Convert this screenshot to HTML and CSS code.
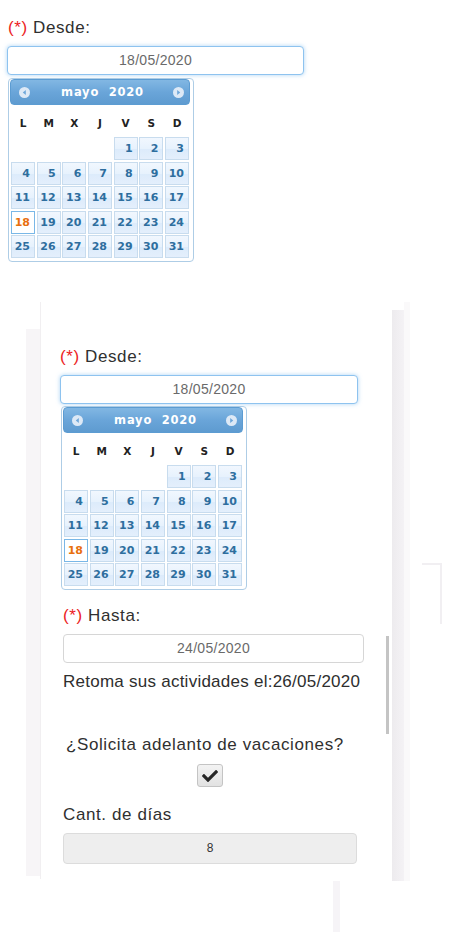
FILE: index.html
```html
<!DOCTYPE html>
<html lang="es">
<head>
<meta charset="utf-8">
<title>Vacaciones</title>
<link rel="stylesheet" href="styles.css">
</head>
<body>
<section class="top">
  <label class="lbl"><span class="req">(*)</span> Desde:</label>
  <div class="date-input focus top-input">18/05/2020</div>
  <div class="dp">
    <div class="dp-head">
      <svg class="nav" width="11" height="11" viewBox="0 0 11 11"><circle cx="5.5" cy="5.5" r="5.5" fill="#dde9f6"/><polygon points="6.8,3 3.8,5.5 6.8,8" fill="#6ea7d9"/></svg>
      <span class="dp-title">mayo&nbsp; 2020</span>
      <svg class="nav" width="11" height="11" viewBox="0 0 11 11"><circle cx="5.5" cy="5.5" r="5.5" fill="#dde9f6"/><polygon points="4.2,3 7.2,5.5 4.2,8" fill="#6ea7d9"/></svg>
    </div>
    <div class="dp-dow"><span>L</span><span>M</span><span>X</span><span>J</span><span>V</span><span>S</span><span>D</span></div>
    <div class="dp-days">
      <span class="blank"></span><span class="blank"></span><span class="blank"></span><span class="blank"></span>
      <span>1</span><span>2</span><span>3</span>
      <span>4</span><span>5</span><span>6</span><span>7</span><span>8</span><span>9</span><span>10</span>
      <span>11</span><span>12</span><span>13</span><span>14</span><span>15</span><span>16</span><span>17</span>
      <span class="on">18</span><span>19</span><span>20</span><span>21</span><span>22</span><span>23</span><span>24</span>
      <span>25</span><span>26</span><span>27</span><span>28</span><span>29</span><span>30</span><span>31</span>
    </div>
  </div>
</section>

<section class="frame">
  <div class="spacer"></div>
  <div class="strip-left"></div>
  <div class="panel">
    <label class="lbl desde2"><span class="req">(*)</span> Desde:</label>
    <div class="date-input focus mid-input">18/05/2020</div>
    <div class="dp dp2">
      <div class="dp-head">
        <svg class="nav" width="11" height="11" viewBox="0 0 11 11"><circle cx="5.5" cy="5.5" r="5.5" fill="#dde9f6"/><polygon points="6.8,3 3.8,5.5 6.8,8" fill="#6ea7d9"/></svg>
        <span class="dp-title">mayo&nbsp; 2020</span>
        <svg class="nav" width="11" height="11" viewBox="0 0 11 11"><circle cx="5.5" cy="5.5" r="5.5" fill="#dde9f6"/><polygon points="4.2,3 7.2,5.5 4.2,8" fill="#6ea7d9"/></svg>
      </div>
      <div class="dp-dow"><span>L</span><span>M</span><span>X</span><span>J</span><span>V</span><span>S</span><span>D</span></div>
      <div class="dp-days">
        <span class="blank"></span><span class="blank"></span><span class="blank"></span><span class="blank"></span>
        <span>1</span><span>2</span><span>3</span>
        <span>4</span><span>5</span><span>6</span><span>7</span><span>8</span><span>9</span><span>10</span>
        <span>11</span><span>12</span><span>13</span><span>14</span><span>15</span><span>16</span><span>17</span>
        <span class="on">18</span><span>19</span><span>20</span><span>21</span><span>22</span><span>23</span><span>24</span>
        <span>25</span><span>26</span><span>27</span><span>28</span><span>29</span><span>30</span><span>31</span>
      </div>
    </div>
    <label class="lbl hasta"><span class="req">(*)</span> Hasta:</label>
    <div class="date-input plain">24/05/2020</div>
    <p class="retoma">Retoma sus actividades el:26/05/2020</p>
    <p class="question">¿Solicita adelanto de vacaciones?</p>
    <div class="check">
      <svg width="16" height="16" viewBox="0 0 512 512"><path fill="#262626" d="M173.898 439.404l-166.4-166.4c-9.997-9.997-9.997-26.206 0-36.204l36.203-36.204c9.997-9.998 26.207-9.998 36.204 0L192 312.69 432.095 72.596c9.997-9.997 26.207-9.997 36.204 0l36.203 36.204c9.997 9.997 9.997 26.206 0 36.204l-294.4 294.401c-9.998 9.997-26.207 9.997-36.204-.001z"/></svg>
    </div>
    <label class="lbl cant">Cant. de días</label>
    <div class="num-input">8</div>
    <div class="thumb"></div>
  </div>
  <div class="strip-right"></div>
  <div class="strip-b"></div>
  <div class="gap"></div>
  <div class="bracket"></div>
</section>
<div class="bottom-strip"></div>
</body>
</html>
```

FILE: styles.css
```css
* { box-sizing: border-box; }
html, body { margin: 0; padding: 0; background: #fff; }
body {
  width: 460px;
  height: 946px;
  overflow: hidden;
  font-family: "Liberation Sans", Arial, sans-serif;
  color: #333;
}

.top { padding: 18px 0 0 7px; }

.lbl {
  display: block;
  font-size: 17px;
  line-height: 20px;
  letter-spacing: 0.6px;
  color: #303030;
  white-space: nowrap;
}
.top .lbl { margin-left: 1px; }
.req { color: #ec1c24; }

.date-input {
  height: 29px;
  border: 1px solid #d6d6d6;
  border-radius: 4px;
  font-size: 14px;
  letter-spacing: 0.3px;
  line-height: 27px;
  color: #6a6a6a;
  text-align: center;
  background: #fff;
}
.date-input.focus {
  border-color: #8ec3ef;
  box-shadow: 0 0 4px rgba(102, 175, 233, 0.55);
}
.top-input { width: 297px; margin-top: 8px; }
.mid-input { width: 298px; margin-top: 8px; }

/* datepicker */
.dp {
  width: 186px;
  margin: 3px 0 0 1px;
  padding: 0 3px 3px 1px;
  border: 1px solid #aecde6;
  border-radius: 4px;
  background: #fff;
  font-family: "DejaVu Sans", Verdana, sans-serif;
  font-weight: bold;
  font-size: 11px;
}
.dp2 { margin-top: 2px; }
.dp-head {
  height: 26px;
  border: 1px solid #5c9cd2;
  border-radius: 4px;
  background: linear-gradient(#82b7e3 0%, #6aa5d9 50%, #5e9bd0 100%);
  display: flex;
  align-items: center;
  justify-content: space-between;
  padding: 0 5px 0 8px;
  color: #fff;
}
.nav { display: block; }
.dp-title {
  font-size: 11.5px;
  letter-spacing: 0.8px;
  margin-left: 2px;
}
.dp-dow {
  display: grid;
  grid-template-columns: repeat(7, 1fr);
  column-gap: 1.67px;
  width: 178px;
  margin-left: 1px;
  height: 32px;
  padding-top: 3px;
  align-items: center;
  text-align: center;
  color: #222;
  font-size: 10.5px;
}
.dp-days {
  display: grid;
  grid-template-columns: repeat(7, 1fr);
  grid-auto-rows: 23px;
  column-gap: 1.67px;
  row-gap: 1.5px;
  width: 178px;
  margin-left: 1px;
}
.dp-days span {
  border: 1px solid #c8dcee;
  background: linear-gradient(#f1f7fe 0%, #e7f2fd 50%, #dcebfb 52%, #e4effc 100%);
  color: #2e6e9e;
  text-align: right;
  padding-right: 4px;
  line-height: 21px;
}
.dp-days span.blank { border: 0; background: none; }
.dp-days span.on {
  border-color: #79b7e7;
  background: #fff;
  color: #e8700f;
}

/* second frame */
.frame {
  display: grid;
  grid-template-columns: 26px 14px 352px 12px 6px 12px 20px 1fr;
  align-items: start;
  margin-top: 40px;
}
.strip-left {
  margin-top: 27px;
  height: 547px;
  background: #f7f5f7;
}
.panel {
  position: relative;
  height: 577px;
  padding: 45px 0 0 19px;
  background: #fff;
  border-left: 1px solid #f1eff1;
}
.strip-right {
  margin-top: 8px;
  height: 571px;
  background: linear-gradient(90deg, #edebee, #f4f2f5);
}
.strip-b {
  height: 579px;
  background: #faf9fa;
}
.bracket {
  margin-top: 261px;
  height: 61px;
  border-top: 2px solid #f1eff2;
  border-right: 2px solid #f1eff2;
}

.hasta { margin: 16px 0 0 3px; }
.plain { width: 301px; margin: 8px 0 0 3px; }

.retoma {
  margin: 9px 0 0 3px;
  font-size: 17px;
  line-height: 20px;
  letter-spacing: 0.25px;
  color: #2e2e2e;
  white-space: nowrap;
}
.question {
  margin: 43px 0 0 6px;
  font-size: 17px;
  line-height: 20px;
  letter-spacing: 0.6px;
  color: #303030;
  white-space: nowrap;
}
.check {
  width: 26px;
  height: 23px;
  margin: 9px 0 0 137px;
  border: 1px solid #c4c4c4;
  border-radius: 3px;
  background: linear-gradient(#f3f3f3, #e2e2e2);
  display: flex;
  align-items: center;
  justify-content: center;
}
.cant { margin: 18px 0 0 3px; }
.num-input {
  width: 294px;
  height: 31px;
  margin: 8px 0 0 3px;
  border: 1px solid #dcdcdc;
  border-radius: 4px;
  background: #eeeeee;
  text-align: center;
  font-size: 12px;
  line-height: 29px;
  color: #333;
}
.thumb {
  position: absolute;
  left: 345px;
  top: 334px;
  width: 3px;
  height: 98px;
  background: #c4c4c4;
}
.bottom-strip {
  margin-left: 333px;
  width: 7px;
  height: 51px;
  background: #f6f4f7;
}
```
